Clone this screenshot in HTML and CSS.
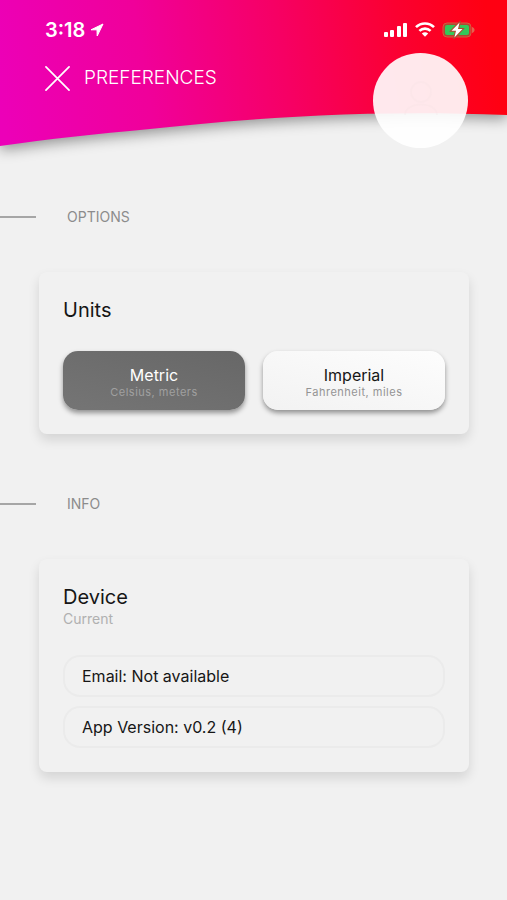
FILE: index.html
```html
<!DOCTYPE html>
<html lang="en">
<head>
<meta charset="utf-8">
<meta name="viewport" content="width=device-width, initial-scale=1">
<title>Preferences</title>
<link rel="stylesheet" href="styles.css">
</head>
<body>
<header class="header">
  <svg class="wave" viewBox="0 0 507 147" preserveAspectRatio="none" aria-hidden="true">
    <defs>
      <linearGradient id="sky" gradientUnits="userSpaceOnUse" x1="0" y1="110" x2="490" y2="30">
        <stop offset="0" stop-color="#ec00b8"/>
        <stop offset="0.3" stop-color="#f0009a"/>
        <stop offset="0.58" stop-color="#f60064"/>
        <stop offset="0.82" stop-color="#fb0030"/>
        <stop offset="1" stop-color="#ff0012"/>
      </linearGradient>
    </defs>
    <path fill="url(#sky)" d="M0 0H507V115C360 109 245 119 150 129C95 134 50 139 0 146Z"/>
  </svg>
  <div class="status">
    <div class="clock">
      <span>3:18</span>
      <svg width="14" height="14" viewBox="0 0 14 14" aria-hidden="true"><path fill="currentColor" stroke="currentColor" stroke-linejoin="round" d="M13 1L1 6.8H7L7.2 13Z"/></svg>
    </div>
    <div class="signals">
      <svg width="24" height="16" viewBox="0 0 24 16" aria-hidden="true"><g fill="currentColor"><rect x="0" y="10" width="4" height="5" rx="1"/><rect x="6" y="8" width="4" height="7" rx="1"/><rect x="13" y="4" width="4" height="11" rx="1"/><rect x="19" y="1" width="4" height="14" rx="1"/></g></svg>
      <svg width="20" height="16" viewBox="0 0 20 16" aria-hidden="true"><g fill="none" stroke="currentColor" stroke-width="2.6"><path d="M1 5.2C6 0.2 14 0.2 19 5.2"/><path d="M4.4 8.9C7.6 5.8 12.4 5.8 15.6 8.9"/></g><path fill="currentColor" d="M6.8 11.4C8.8 9.8 11.2 9.8 13.2 11.4L10 14.8Z"/></svg>
      <svg width="33" height="18" viewBox="0 0 33 18" aria-hidden="true"><rect x="1" y="2" width="28" height="14" rx="4" fill="#b34532" stroke="#d8593f"/><rect x="3" y="4" width="24" height="10" rx="2" fill="#34c759"/><path fill="#e5604e" d="M30 6C33.4 7 33.4 11 30 12Z"/><path d="M17.6 1.5L9.5 9.8H14L12.4 16.5L20.5 8H16Z" fill="#fff" stroke="#b34532" stroke-width="2" paint-order="stroke"/></svg>
    </div>
  </div>
  <div class="bar">
    <button class="close" type="button" aria-label="Close">
      <svg width="25" height="25" viewBox="0 0 26 26" aria-hidden="true"><path fill="none" stroke="currentColor" stroke-width="1.8" stroke-linecap="round" d="M1 1L25 25M25 1L1 25"/></svg>
    </button>
    <h1 class="title">PREFERENCES</h1>
  </div>
  <button class="avatar" type="button" aria-label="Profile">
    <svg width="48" height="48" viewBox="0 0 48 48" aria-hidden="true"><g fill="none" stroke="#f3dfe2" stroke-width="2" opacity="0.2"><circle cx="24" cy="15" r="10"/><path d="M8 38C8 24 40 24 40 38"/></g></svg>
  </button>
</header>
<main>
  <section class="section">
    <h2 class="label">OPTIONS</h2>
    <div class="card">
      <h3 class="heading">Units</h3>
      <div class="choices">
        <button class="choice selected" type="button" aria-pressed="true"><span class="name">Metric</span><span class="note">Celsius, meters</span></button>
        <button class="choice" type="button" aria-pressed="false"><span class="name">Imperial</span><span class="note">Fahrenheit, miles</span></button>
      </div>
    </div>
  </section>
  <section class="section">
    <h2 class="label">INFO</h2>
    <div class="card">
      <h3 class="heading">Device</h3>
      <p class="sub">Current</p>
      <ul class="rows">
        <li class="row">Email: Not available</li>
        <li class="row">App Version: v0.2 (4)</li>
      </ul>
    </div>
  </section>
</main>
</body>
</html>
```
FILE: styles.css
```css
* { box-sizing: border-box; }
body {
  margin: 0;
  min-height: 100vh;
  background: #f1f1f1;
  color: #161616;
  font-family: Inter, "Liberation Sans", sans-serif;
}
h1, h2, h3, p, ul { margin: 0; padding: 0; }
button { border: 0; padding: 0; font: inherit; color: inherit; cursor: pointer; }
svg { display: block; }

.header {
  position: relative;
  height: 147px;
  padding: 18px 32px 0 45px;
  color: #fff;
}
.wave {
  position: absolute;
  inset: 0;
  z-index: -1;
  width: 100%;
  height: 100%;
  overflow: visible;
  filter: drop-shadow(0 4px 7px rgba(0, 0, 0, 0.4));
}
.status {
  display: flex;
  justify-content: space-between;
  align-items: center;
  height: 24px;
}
.clock {
  display: flex;
  align-items: center;
  gap: 5px;
  font-size: 20px;
  font-weight: 600;
}
.signals { display: flex; align-items: center; gap: 7px; }
.bar {
  display: flex;
  align-items: center;
  gap: 14px;
  margin-top: 21px;
  height: 30px;
}
.close { background: none; }
.title { font-size: 19px; font-weight: 300; line-height: 28px; }
.avatar {
  position: absolute;
  top: 53px;
  right: 39px;
  display: grid;
  place-items: center;
  width: 95px;
  height: 95px;
  border-radius: 50%;
  background: rgba(255, 255, 255, 0.91);
}

.section { padding: 60px 38px 0 39px; }
.label {
  display: flex;
  align-items: center;
  gap: 31px;
  margin: 0 0 45px -39px;
  color: #8c8c8c;
  font-size: 14px;
  font-weight: 400;
  line-height: 20px;
}
.label::before { content: ""; width: 36px; height: 2px; background: #a6a6a6; }
.card {
  padding: 24px;
  border-radius: 8px;
  background: #f1f1f1;
  box-shadow: 0 6px 12px rgba(0, 0, 0, 0.12);
}
.heading { font-size: 20px; font-weight: 400; line-height: 28px; }
.choices {
  display: grid;
  grid-template-columns: 1fr 1fr;
  gap: 18px;
  margin-top: 27px;
}
.choice {
  display: flex;
  flex-direction: column;
  align-items: center;
  justify-content: center;
  height: 59px;
  padding-top: 2px;
  border-radius: 15px;
  background: linear-gradient(15deg, #f2f2f2, #fdfdfd);
  box-shadow: 0 3px 5px rgba(0, 0, 0, 0.4);
}
.selected { background: linear-gradient(15deg, #757575, #676767); color: #fff; }
.name { font-size: 16px; line-height: 20px; }
.note { color: #949494; font-size: 11px; line-height: 14px; letter-spacing: 0.5px; }
.selected .note { color: #a0a0a0; }
.sub { color: #b0b0b0; font-size: 14px; line-height: 16px; }
.rows { display: grid; gap: 9px; margin-top: 28px; list-style: none; }
.row {
  padding: 9px 17px;
  border: 2px solid #ebebeb;
  border-radius: 17px;
  font-size: 16px;
  line-height: 20px;
}
```
